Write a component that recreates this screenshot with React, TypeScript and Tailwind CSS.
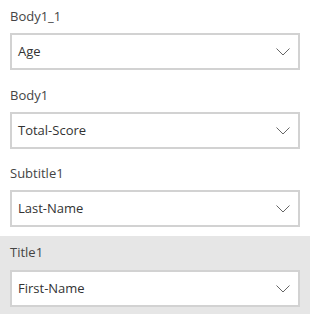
import React from "react";

const Chevron = () => (
  <svg width="14" height="8" viewBox="0 0 14 8" className="shrink-0">
    <path d="M0.5 0.5 L7 7 L13.5 0.5" fill="none" stroke="#666" strokeWidth="1" />
  </svg>
);

const Section = ({ label, value, gray, h, lh }: { label: string; value: string; gray?: boolean; h: string; lh: string }) => (
  <div className={`${h} px-[10px] ${gray ? "bg-[#e6e6e6]" : "bg-white"} flex flex-col`}>
    <div className={`${lh} flex items-center text-[13px] text-[#444]`}>{label}</div>
    <div className="h-[37px] border-2 border-[#d2d2d2] bg-white flex items-center justify-between pl-[6px] pr-[8px] text-[13px] text-[#333]">
      <span>{value}</span>
      <Chevron />
    </div>
  </div>
);

export default function App() {
  return (
    <div className="w-[310px] h-[322px] bg-white" style={{ fontFamily: '"Segoe UI", "Open Sans", "Noto Sans", sans-serif' }}>
      <Section h="h-[80px]" lh="h-[33px]" label="Body1_1" value="Age" />
      <Section h="h-[78px]" lh="h-[32px]" label="Body1" value="Total-Score" />
      <Section h="h-[78px]" lh="h-[32px]" label="Subtitle1" value="Last-Name" />
      <Section h="h-[78px]" lh="h-[34px]" label="Title1" value="First-Name" gray />
    </div>
  );
}
